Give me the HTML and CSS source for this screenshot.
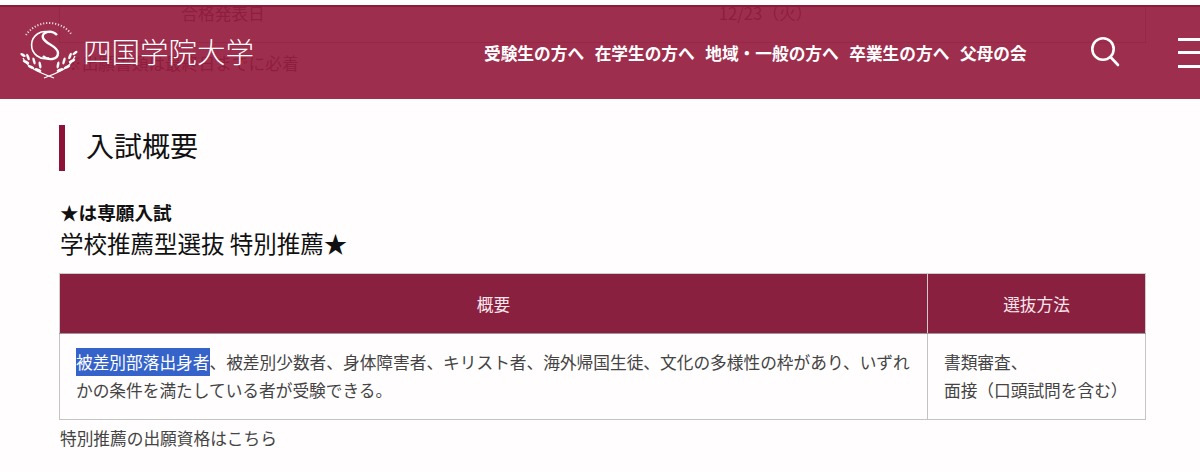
FILE: index.html
```html
<!DOCTYPE html>
<html lang="ja">
<head>
    <meta charset="UTF-8">
    <title>四国学院大学 入試概要</title>
    <link rel="stylesheet" href="styles.css">
</head>
<body>
    <header class="site-header">
        <a class="logo" href="#">
            <svg class="logo-mark" width="60" height="60" viewBox="0 0 60 60" fill="none" stroke="#fff">
                <path d="M6 13A28 28 0 0 1 52 13" stroke-width="2" stroke-dasharray="1.2 1.8" opacity=".8"/>
                <path d="M30 10.5A13.500 13.500 0 1 0 29 36" stroke-width="1.600"/>
                <path d="M37 13C31 7 21 10 23 16C25 22 38 24 38 31C38 38 28 39 23 34" stroke-width="2.400"/>
                <path d="M3 36C8 46 18 50 34 56M55 34C50 46 40 50 24 56" stroke-width="1.300"/>
                <g fill="#fff" stroke="none">
                    <ellipse cx="3" cy="33" rx="3" ry="1.300" transform="rotate(30 3 33)"/>
                    <ellipse cx="6" cy="40" rx="3.500" ry="1.400" transform="rotate(25 6 40)"/>
                    <ellipse cx="8" cy="35" rx="3.500" ry="1.300" transform="rotate(70 8 35)"/>
                    <ellipse cx="11" cy="45" rx="3.500" ry="1.400" transform="rotate(25 11 45)"/>
                    <ellipse cx="14" cy="39" rx="3.500" ry="1.300" transform="rotate(75 14 39)"/>
                    <ellipse cx="18" cy="48" rx="3.500" ry="1.400" transform="rotate(20 18 48)"/>
                    <ellipse cx="20" cy="43" rx="3.500" ry="1.300" transform="rotate(80 20 43)"/>
                    <ellipse cx="55" cy="31" rx="3" ry="1.300" transform="rotate(-35 55 31)"/>
                    <ellipse cx="52" cy="39" rx="3.500" ry="1.400" transform="rotate(-25 52 39)"/>
                    <ellipse cx="50" cy="34" rx="3.500" ry="1.300" transform="rotate(-70 50 34)"/>
                    <ellipse cx="47" cy="45" rx="3.500" ry="1.400" transform="rotate(-25 47 45)"/>
                    <ellipse cx="44" cy="39" rx="3.500" ry="1.300" transform="rotate(-75 44 39)"/>
                    <ellipse cx="40" cy="48" rx="3.500" ry="1.400" transform="rotate(-20 40 48)"/>
                    <ellipse cx="38" cy="43" rx="3.500" ry="1.300" transform="rotate(-80 38 43)"/>
                </g>
            </svg>
            <span class="logo-text">四国学院大学</span>
        </a>
        <nav class="global-nav">
            <a href="#">受験生の方へ</a>
            <a href="#">在学生の方へ</a>
            <a href="#">地域・一般の方へ</a>
            <a href="#">卒業生の方へ</a>
            <a href="#">父母の会</a>
        </nav>
        <button class="icon-btn search-btn" aria-label="検索">
            <svg width="32" height="32" viewBox="0 0 32 32" fill="none" stroke="#fff" stroke-width="2.600">
                <circle cx="14" cy="13" r="10.700"/>
                <path d="M21.500 21L29 29" stroke-linecap="round"/>
            </svg>
        </button>
        <div class="menu-btn"><span></span><span></span><span></span></div>
    </header>

    <main class="content">
        <table class="schedule">
            <tr>
                <td class="schedule-label">合格発表日</td>
                <td class="schedule-date">12/23（火）</td>
            </tr>
        </table>
        <p class="note">※出願書類は最終日までに必着</p>

        <h2 class="page-title">入試概要</h2>
        <p class="lead">★は専願入試</p>
        <h3 class="sub-title">学校推薦型選抜 特別推薦★</h3>

        <table class="summary">
            <tr>
                <th>概要</th>
                <th class="col-method">選抜方法</th>
            </tr>
            <tr>
                <td><span class="selected">被差別部落出身者</span>、被差別少数者、身体障害者、キリスト者、海外帰国生徒、文化の多様性の枠があり、いずれかの条件を満たしている者が受験できる。</td>
                <td class="col-method">書類審査、<br>面接（口頭試問を含む）</td>
            </tr>
        </table>
        <p class="more">特別推薦の出願資格はこちら</p>
    </main>
</body>
</html>
```

FILE: styles.css
```css
body {
    margin: 0;
    background-color: #fffdfe;
    color: #444;
    font-family: "Noto Sans CJK JP", "Noto Sans", sans-serif;
    font-size: 16.700px;
    overflow: hidden;
}

a {
    color: inherit;
    text-decoration: none;
}

/* Header */
.site-header {
    position: absolute;
    top: 5px;
    left: 0;
    right: 0;
    height: 94px;
    display: flex;
    align-items: center;
    box-sizing: border-box;
    border-top: 2px solid #8c1a3a;
    background-color: rgba(150, 28, 62, 0.92);
    color: #fff;
}

.logo {
    display: flex;
    align-items: center;
    flex-shrink: 0;
    margin-left: 20px;
    width: 464px;
}

.logo-mark {
    margin-top: -2px;
}

.logo-text {
    margin: -4px 0 0 3px;
    font-size: 28.500px;
    font-weight: 300;
    line-height: 1;
}

.global-nav {
    display: flex;
    flex-shrink: 0;
    gap: 10.500px;
    font-size: 16.700px;
    font-weight: 700;
    line-height: 1;
    white-space: nowrap;
}

.icon-btn {
    flex-shrink: 0;
    padding: 0;
    border: none;
    background: none;
}

.search-btn {
    margin: -3px 0 0 62px;
    height: 32px;
}

.menu-btn {
    display: flex;
    flex-direction: column;
    flex-shrink: 0;
    gap: 10.500px;
    width: 40px;
    margin-left: 57px;
    margin-top: -1px;
}

.menu-btn span {
    display: block;
    height: 3px;
    background-color: #fff;
}

/* Page content */
.content {
    padding: 5px 54px 0 59px;
}

table {
    width: 100%;
    border-collapse: collapse;
}

.schedule {
    height: 37px;
    color: #333;
}

.schedule td {
    border: 1px solid #aaa;
    border-top: none;
    padding: 0 0 21px;
    line-height: 16px;
    text-align: center;
}

.schedule .schedule-label {
    width: 326px;
    border-right: none;
}

.schedule .schedule-date {
    border-left: none;
}

.note {
    margin: 10px 0 0 6px;
    line-height: 20px;
    color: #333;
}

.page-title {
    margin: 52px 0 0;
    height: 46px;
    border-left: 6px solid #8e1237;
    padding-left: 21px;
    color: #111;
    font-size: 28px;
    font-weight: 400;
    line-height: 40px;
}

.lead {
    margin: 29px 0 0 1px;
    color: #111;
    font-size: 18.600px;
    font-weight: 700;
    line-height: 24px;
}

.sub-title {
    margin: 2px 0 0 1px;
    color: #111;
    font-size: 23.500px;
    font-weight: 400;
    line-height: 34px;
}

.summary {
    margin: 13px 0 0;
    width: 1087px;
}

.summary th {
    height: 59px;
    padding: 0;
    border: 1px solid #ccc;
    border-bottom-color: #999;
    background-color: #8a2040;
    color: #fbe6ec;
    font-weight: 400;
}

.summary th.col-method {
    border-left-color: #e9a3b8;
}

.summary td {
    height: 86px;
    box-sizing: border-box;
    padding: 0 16px 2px;
    border: 1px solid #c4c4c4;
    line-height: 28px;
}

.col-method {
    width: 217px;
}

.selected {
    padding: 2px 0;
    background-color: #3563c9;
    color: #fff;
}

.more {
    margin: 8px 0 0 1px;
    line-height: 20px;
}
```
